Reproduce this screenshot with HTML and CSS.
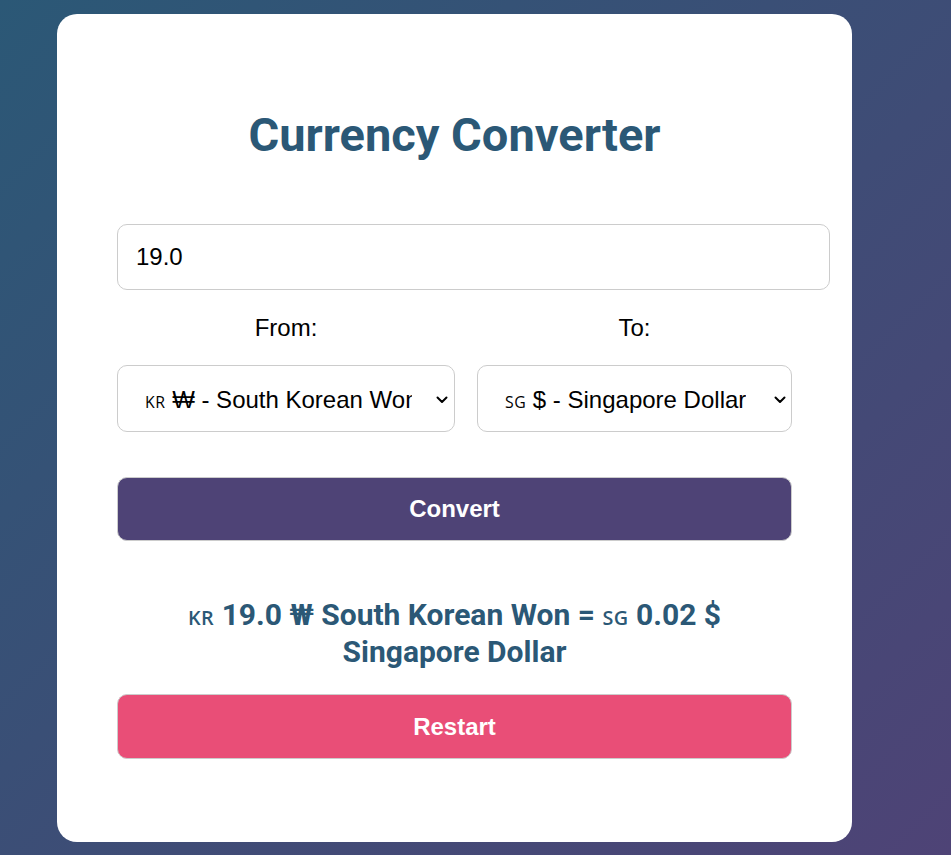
FILE: index.html
```html
<!DOCTYPE html>
<html lang="en">
<head>
<meta charset="utf-8">
<title>Currency Converter</title>
<link rel="stylesheet" href="styles.css">
</head>
<body>
<main class="card">
  <h1 class="title">Currency Converter</h1>
  <input class="amount" type="text" value="19.0">
  <div class="pickers">
    <div class="picker picker-from">
      <label class="picker-label">From:</label>
      <div class="select-box">
        <span class="select-text"><span class="flag">KR</span> ₩ - South Korean Won</span>
        <svg class="chevron" width="12" height="8" viewBox="0 0 12 8"><path d="M1.5 1.5 L6 6 L10.5 1.5" fill="none" stroke="#000" stroke-width="2" stroke-linecap="round" stroke-linejoin="round"/></svg>
      </div>
    </div>
    <div class="picker picker-to">
      <label class="picker-label">To:</label>
      <div class="select-box">
        <span class="select-text"><span class="flag">SG</span> $ - Singapore Dollar</span>
        <svg class="chevron" width="12" height="8" viewBox="0 0 12 8"><path d="M1.5 1.5 L6 6 L10.5 1.5" fill="none" stroke="#000" stroke-width="2" stroke-linecap="round" stroke-linejoin="round"/></svg>
      </div>
    </div>
  </div>
  <button class="btn btn-convert" type="button">Convert</button>
  <p class="result"><span class="flag">KR</span> 19.0 ₩ South Korean Won = <span class="flag">SG</span> 0.02 $ Singapore Dollar</p>
  <button class="btn btn-restart" type="button">Restart</button>
</main>
</body>
</html>
```
FILE: styles.css
```css
* { box-sizing: border-box; }
html, body { height: 100%; }
body {
  margin: 0;
  background: linear-gradient(135deg, #2b5876, #4e4376);
  font-family: "Liberation Sans", Arial, sans-serif;
  padding: 14px 0 0 57px;
}
.card {
  width: 795px;
  height: 828px;
  background: #fff;
  border-radius: 20px;
  padding: 74px 60px 83px;
  display: flex;
  flex-direction: column;
}
.title {
  margin: 21px 0 0;
  font-family: Roboto, sans-serif;
  font-weight: 700;
  font-size: 47px;
  line-height: 52px;
  color: #2b5876;
  text-align: center;
}
.amount {
  margin-top: 63px;
  box-sizing: content-box;
  width: 100%;
  height: 64px;
  padding: 0 18px;
  border: 1px solid #ccc;
  border-radius: 10px;
  font-family: "Liberation Sans", Arial, sans-serif;
  font-size: 24px;
  color: #000;
  outline: none;
}
.pickers {
  display: flex;
  gap: 22px;
  margin-top: 26px;
}
.picker {
  display: flex;
  flex-direction: column;
  align-items: center;
  gap: 26px;
}
.picker-from { width: 338px; }
.picker-to { width: 315px; }
.picker-label {
  font-size: 24px;
  line-height: 23px;
  color: #000;
}
.select-box {
  position: relative;
  width: 100%;
  height: 67px;
  padding: 3px 42px 0 27px;
  border: 1px solid #ccc;
  border-radius: 10px;
  background: #fff;
  display: flex;
  align-items: center;
}
.select-text {
  font-size: 24px;
  color: #000;
  white-space: nowrap;
  overflow: hidden;
  line-height: 30px;
}
.chevron {
  position: absolute;
  top: 30px;
  right: 6px;
}
.picker-to .chevron { right: 5px; }
.flag {
  font-family: "Open Sans", "Noto Sans", sans-serif;
  font-size: 0.66em;
  line-height: 1;
  letter-spacing: 0.5px;
}
.btn {
  width: 100%;
  height: 65px;
  border: 1px solid #ccc;
  border-radius: 10px;
  font-family: "Liberation Sans", Arial, sans-serif;
  font-weight: 700;
  font-size: 24px;
  color: #fff;
}
.btn-convert {
  margin-top: 45px;
  background: #4e4376;
}
.result {
  margin: 55px 0 0;
  font-family: Roboto, sans-serif;
  font-weight: 700;
  font-size: 30px;
  line-height: 37px;
  color: #2b5876;
  text-align: center;
}
.result .flag { font-weight: 600; }
.btn-restart {
  margin-top: 24px;
  background: #e94e77;
}
```
